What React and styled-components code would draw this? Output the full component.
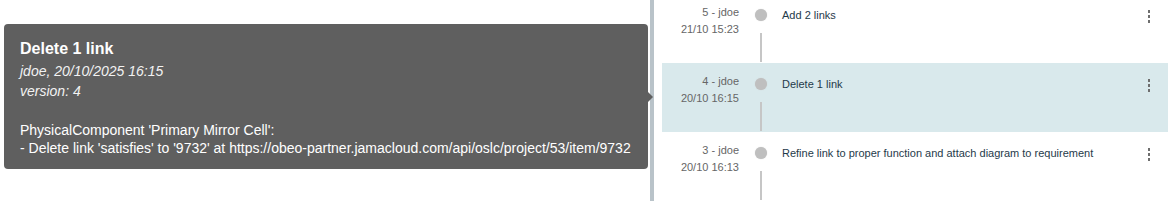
import React from "react";
import styled, { createGlobalStyle } from "styled-components";

const GlobalStyle = createGlobalStyle`
  html, body {
    margin: 0;
    padding: 0;
    background: #ffffff;
    font-family: "Liberation Sans", Arial, sans-serif;
  }
`;

const versions = [
  { id: 5, user: "jdoe", date: "21/10 15:23", title: "Add 2 links" },
  { id: 4, user: "jdoe", date: "20/10 16:15", title: "Delete 1 link", active: true },
  {
    id: 3,
    user: "jdoe",
    date: "20/10 16:13",
    title: "Refine link to proper function and attach diagram to requirement",
  },
];

const App = () => {
  return (
    <Page>
      <GlobalStyle />
      <LeftPane />
      <Divider />
      <RightPane>
        <List>
          {versions.map((v) => (
            <Row key={v.id} $active={v.active}>
              <Meta>
                <div>
                  {v.id} - {v.user}
                </div>
                <div>{v.date}</div>
              </Meta>
              <Timeline>
                <Dot />
                <Line />
              </Timeline>
              <Title>{v.title}</Title>
              <Kebab>
                <span />
                <span />
                <span />
              </Kebab>
            </Row>
          ))}
        </List>
      </RightPane>
      <Tooltip>
        <TipTitle>Delete 1 link</TipTitle>
        <TipMeta>jdoe, 20/10/2025 16:15</TipMeta>
        <TipMeta>version: 4</TipMeta>
        <TipBody>
          <div>PhysicalComponent 'Primary Mirror Cell':</div>
          <div>
            - Delete link 'satisfies' to '9732' at
            https://obeo-partner.jamacloud.com/api/oslc/project/53/item/9732
          </div>
        </TipBody>
      </Tooltip>
    </Page>
  );
};

export default App;

const Page = styled.div`
  position: relative;
  display: flex;
  width: 1171px;
  height: 201px;
  overflow: hidden;
  background: #ffffff;
`;

const LeftPane = styled.div`
  width: 650px;
  flex-shrink: 0;
`;

const Divider = styled.div`
  width: 4px;
  flex-shrink: 0;
  background: #b9c3c9;
`;

const RightPane = styled.div`
  flex: 1;
  overflow: hidden;
  padding: 0 3px 0 8px;
`;

const List = styled.div`
  margin-top: -6px;
`;

const Row = styled.div`
  display: grid;
  grid-template-columns: 77px 43px 1fr 38px;
  height: 69px;
  background: ${(p) => (p.$active ? "#d9e9ec" : "transparent")};
`;

const Meta = styled.div`
  padding-top: 10px;
  text-align: right;
  font-size: 11px;
  line-height: 17px;
  color: #666666;
`;

const Timeline = styled.div`
  display: flex;
  flex-direction: column;
  align-items: center;
  padding-top: 15px;
`;

const Dot = styled.div`
  width: 12px;
  height: 12px;
  border-radius: 50%;
  background: #bfbfbf;
  box-shadow: 0 0 1px #c8c8c8;
`;

const Line = styled.div`
  width: 2px;
  height: 29px;
  margin-top: 12px;
  background: #c6c6c6;
`;

const Title = styled.div`
  padding-top: 14px;
  font-size: 11px;
  line-height: 14px;
  color: #1f3a4a;
  white-space: nowrap;
`;

const Kebab = styled.div`
  display: flex;
  flex-direction: column;
  align-items: center;
  gap: 2.5px;
  padding-top: 16px;

  span {
    width: 2.5px;
    height: 2.5px;
    background: #6e6e6e;
  }
`;

const Tooltip = styled.div`
  position: absolute;
  left: 4px;
  top: 24px;
  width: 644px;
  box-sizing: border-box;
  padding: 15px 16px 12px;
  background: #5f5f5f;
  border-radius: 4px;
  color: #ffffff;
  font-size: 14px;

  &::after {
    content: "";
    position: absolute;
    right: -5px;
    top: 68px;
    border-top: 5px solid transparent;
    border-bottom: 5px solid transparent;
    border-left: 5px solid #5f5f5f;
  }
`;

const TipTitle = styled.div`
  font-size: 16px;
  font-weight: bold;
  line-height: 20px;
  margin-bottom: 2px;
`;

const TipMeta = styled.div`
  font-style: italic;
  line-height: 20px;
  color: #f2f2f2;
`;

const TipBody = styled.div`
  margin-top: 20px;
  line-height: 18px;
`;
